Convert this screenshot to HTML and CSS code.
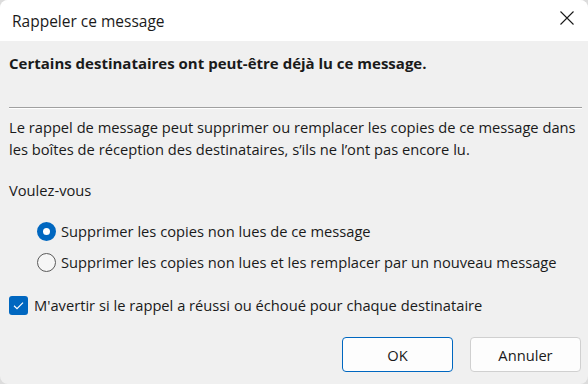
FILE: index.html
```html
<!DOCTYPE html>
<html lang="fr">
<head>
<meta charset="utf-8">
<title>Rappeler ce message</title>
<link rel="stylesheet" href="styles.css">
</head>
<body>
<div class="dialog">
  <div class="titlebar">
    <span class="title">Rappeler ce message</span>
    <span class="close" aria-label="Fermer">
      <svg width="14" height="14" viewBox="0 0 14 14"><path d="M0.5 0.5 L13.5 13.5 M13.5 0.5 L0.5 13.5" stroke="#1a1a1a" stroke-width="1.1" fill="none"/></svg>
    </span>
  </div>
  <div class="content">
    <p class="heading">Certains destinataires ont peut-être déjà lu ce message.</p>
    <div class="sep"></div>
    <p class="para">Le rappel de message peut supprimer ou remplacer les copies de ce message dans<br>les boîtes de réception des destinataires, s’ils ne l’ont pas encore lu.</p>
    <p class="ask">Voulez-vous</p>
    <div class="options">
      <div class="row"><span class="radio checked"></span><span>Supprimer les copies non lues de ce message</span></div>
      <div class="row"><span class="radio"></span><span>Supprimer les copies non lues et les remplacer par un nouveau message</span></div>
    </div>
    <div class="row check-row">
      <span class="checkbox"><svg width="19" height="19" viewBox="0 0 19 19"><path d="M5 9.8 L8 12.6 L14 6.6" stroke="#fff" stroke-width="1.2" fill="none"/></svg></span>
      <span>M'avertir si le rappel a réussi ou échoué pour chaque destinataire</span>
    </div>
    <div class="actions">
      <span class="btn primary">OK</span>
      <span class="btn">Annuler</span>
    </div>
  </div>
</div>
</body>
</html>
```
FILE: styles.css
```css
html, body {
  margin: 0;
  height: 100%;
}
body {
  background: #dcdcdc;
  font-family: "Open Sans", "Noto Sans", sans-serif;
  color: #1a1a1a;
}
.dialog {
  width: 588px;
  height: 384px;
  background: #f0f0f0;
  border-radius: 8px;
  overflow: hidden;
  display: flex;
  flex-direction: column;
}
.titlebar {
  height: 41px;
  flex: none;
  background: #fff;
  display: flex;
  align-items: center;
  justify-content: space-between;
  padding: 0 14px 0 12px;
  box-sizing: border-box;
}
.title {
  font-size: 15.5px;
  line-height: 20px;
}
.close {
  display: flex;
  width: 14px;
  height: 14px;
  margin-bottom: 5px;
}
.content {
  flex: 1;
  display: flex;
  flex-direction: column;
  padding: 0 6px 0 9px;
  font-size: 14.7px;
}
.heading {
  margin: 12px 0 0;
  font-size: 15px;
  font-weight: 700;
  line-height: 20px;
}
.sep {
  margin-top: 34px;
  border-top: 1px solid #a0a0a0;
  border-bottom: 1px solid #ffffff;
}
.para {
  margin: 7px 0 0;
  line-height: 22px;
}
.ask {
  margin: 19px 0 0;
  line-height: 22px;
}
.options {
  margin-top: 19px;
  padding-left: 28px;
  display: flex;
  flex-direction: column;
  gap: 9px;
}
.row {
  display: flex;
  align-items: center;
  gap: 5px;
  height: 22px;
  line-height: 22px;
}
.radio {
  width: 19px;
  height: 19px;
  box-sizing: border-box;
  border-radius: 50%;
  border: 1px solid #5a5a5a;
  background: #f6f6f6;
  flex: none;
}
.radio.checked {
  border: 6px solid #0067c0;
  background: #ffffff;
}
.check-row {
  margin-top: 21px;
  gap: 6px;
}
.checkbox {
  width: 19px;
  height: 19px;
  border-radius: 3px;
  background: #0067c0;
  display: flex;
  flex: none;
}
.actions {
  margin-top: 21px;
  display: flex;
  justify-content: flex-end;
  gap: 17px;
  padding-right: 1px;
}
.btn {
  width: 111px;
  height: 35px;
  box-sizing: border-box;
  border: 1px solid #d0d0d0;
  border-radius: 4px;
  background: #fdfdfd;
  display: flex;
  align-items: center;
  justify-content: center;
  font-size: 14.7px;
}
.btn.primary {
  border-color: #0067c0;
}
```
